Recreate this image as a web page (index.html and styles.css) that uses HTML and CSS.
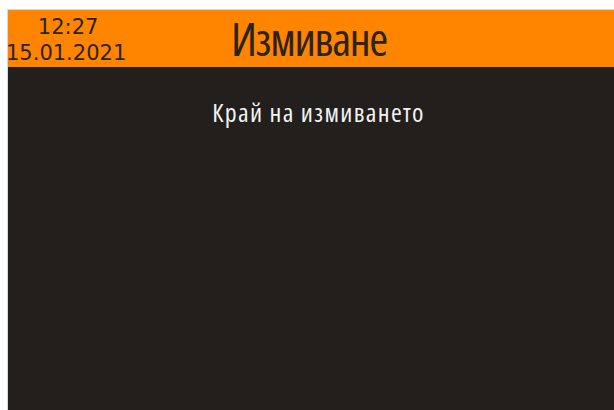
FILE: index.html
```html
<!DOCTYPE html>
<html lang="bg">
<head>
<meta charset="utf-8">
<title>Измиване</title>
<link rel="stylesheet" href="styles.css">
</head>
<body>
<div class="screen">
  <header class="topbar">
    <div class="clock">
      <div class="clock-time">12:27</div>
      <div class="clock-date">15.01.2021</div>
    </div>
    <h1 class="title">Измиване</h1>
  </header>
  <main class="content">
    <p class="status">Край на измиването</p>
  </main>
</div>
</body>
</html>
```
FILE: styles.css
```css
html, body {
  margin: 0;
  padding: 0;
  overflow: hidden;
  background: #ffffff;
}

.screen {
  margin: 9px 0 0 7px;
  width: 621px;
  height: 420px;
  border-top: 1px solid #d6d6d6;
  border-left: 1px solid #d6d6d6;
  background: #231f1c;
  display: flex;
  flex-direction: column;
}

.topbar {
  height: 57px;
  background: #ff8400;
  display: grid;
  grid-template-columns: 1fr auto 1fr;
  padding-right: 19px;
  color: #2b231c;
}

.clock {
  justify-self: start;
  margin: 4px 0 0 -2px;
  font-family: "DejaVu Sans", sans-serif;
  font-size: 21px;
  line-height: 26px;
  text-align: center;
}

.clock-time {
  padding-left: 4px;
}

.title {
  margin: 0;
  font-family: "Open Sans", sans-serif;
  font-stretch: 75%;
  font-weight: normal;
  font-size: 46px;
  line-height: 57px;
  letter-spacing: -1.4px;
}

.content {
  flex: 1;
  display: flex;
  flex-direction: column;
  align-items: center;
}

.status {
  margin: 30px 0 0;
  font-family: "Open Sans", sans-serif;
  font-stretch: 75%;
  font-size: 26px;
  line-height: 30px;
  letter-spacing: 1.3px;
  color: #f2f2f2;
}
```
